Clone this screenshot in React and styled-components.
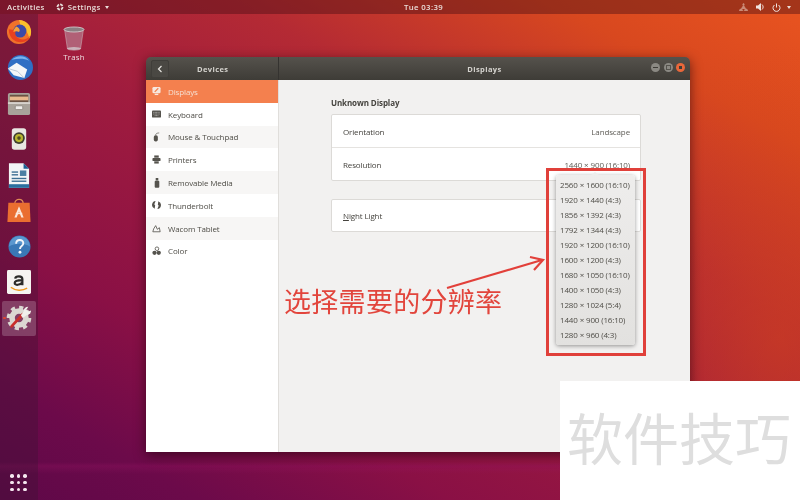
import React from "react";
import styled, { createGlobalStyle } from "styled-components";

const Global = createGlobalStyle`
  html, body { margin: 0; padding: 0; width: 800px; height: 500px; overflow: hidden; background: #fff; }
  * { box-sizing: border-box; }
  body { font-family: "Open Sans", "Noto Sans", "Noto Sans CJK SC", sans-serif; }
`;

const Desktop = styled.div`
  position: relative; width: 800px; height: 500px; overflow: hidden;
  display: flex; flex-direction: column; filter: blur(.3px);
  background:
    linear-gradient(180deg, transparent 0 462px, rgba(150,20,100,.3) 466px, transparent 474px),
    radial-gradient(ellipse 200px 300px at 780px 340px, rgba(215,70,25,.5) 0%, rgba(215,70,25,0) 100%),
    linear-gradient(30deg, #5e0848 0%, #6c0a4a 12%, #8a1045 27%, #a01c3e 50%, #b42a34 66%, #d8481f 85%, #e95420 100%);
`;
const TopBar = styled.header`
  height: 14px; flex: none; display: grid; grid-template-columns: 1fr auto 1fr; align-items: center;
  background: rgba(70, 12, 18, .42); color: #eadcd8; font-size: 7.8px; font-weight: 600; letter-spacing: .35px;
  padding: 0 0 0 7px;
`;
const TopLeft = styled.div` display: flex; align-items: center; gap: 11px; `;
const AppMenu = styled.div` display: flex; align-items: center; gap: 4px; `;
const Clock = styled.span` margin-left: 40px; `;
const Caret = styled.span`
  width: 0; height: 0; border-left: 2.5px solid transparent; border-right: 2.5px solid transparent; border-top: 3px solid #eadcd8;
`;
const TopRight = styled.div` display: flex; align-items: center; justify-content: flex-end; gap: 6px; padding-right: 9px; `;
const Body = styled.div` flex: 1; display: flex; min-height: 0; `;
const Dock = styled.nav`
  width: 38px; flex: none; display: flex; flex-direction: column; align-items: center;
  background: rgba(60, 20, 50, .34); padding-top: 0.5px; position: relative;
`;
const DockSlot = styled.div`
  width: 34px; height: 35px; margin-bottom: .75px; display: flex; align-items: center; justify-content: center;
  border-radius: 2px; position: relative; background: ${p => p.$active ? "rgba(255,255,255,.2)" : "transparent"};
`;
const RunDot = styled.span`
  position: absolute; left: 1px; top: 16px; width: 2.5px; height: 2.5px; border-radius: 50%; background: #e0452f;
`;
const AppsGrid = styled.div`
  position: absolute; bottom: 9px; left: 10px; display: grid; grid-template-columns: repeat(3, 3.5px); gap: 3.2px;
`;
const AppsDot = styled.span` width: 3.5px; height: 3.5px; border-radius: 50%; background: #f6e8f0; `;

const DesktopIcon = styled.div`
  position: absolute; left: 55px; top: 26px; width: 38px; display: flex; flex-direction: column; align-items: center;
  color: #eedde0; font-size: 7.8px; letter-spacing: .2px; gap: 1px;
`;

const Window = styled.section`
  position: absolute; left: 146px; top: 57px; width: 544px; height: 395px;
  border-radius: 5px 5px 0 0; overflow: hidden; display: flex; flex-direction: column;
  box-shadow: 0 3px 12px rgba(30,0,10,.6);
`;
const TitleBar = styled.div`
  height: 23px; flex: none; display: flex; background: linear-gradient(#55524c, #3e3c37); color: #d6d4cf;
  font-size: 7.5px; font-weight: 700; letter-spacing: .4px;
`;
const TitleLeft = styled.div`
  width: 133px; flex: none; display: flex; align-items: center; border-right: 1px solid #353330; padding-left: 5px;
`;
const BackBtn = styled.div`
  width: 18px; height: 18px; display: flex; align-items: center; justify-content: center; border: 1px solid #403e3a;
  border-radius: 2px; margin-right: 28px; background: #4a4843;
`;
const TitleMain = styled.div` flex: 1; display: flex; align-items: center; justify-content: center; position: relative; `;
const Controls = styled.div` position: absolute; right: 5px; top: 6px; display: flex; gap: 3.5px; `;
const Ctl = styled.span`
  width: 9px; height: 9px; border-radius: 50%; background: ${p => p.$close ? "#e9673a" : "#8b8983"};
  display: flex; align-items: center; justify-content: center;
`;
const CtlMark = styled.span`
  width: ${p => p.$w}px; height: ${p => p.$h}px; background: ${p => p.$fill ? "#3e3c37" : "transparent"};
  border: ${p => p.$fill ? "none" : "1px solid #55534d"};
`;
const Content = styled.div` flex: 1; display: flex; min-height: 0; `;
const Sidebar = styled.aside` width: 133px; flex: none; background: #fff; border-right: 1px solid #e0dedb; `;
const SideRow = styled.div`
  height: 22.8px; display: flex; align-items: center; gap: 7px; padding-left: 6px; font-size: 8px; letter-spacing: -.13px;
  color: ${p => p.$active ? "#f5dfd2" : "#4f4d47"};
  background: ${p => p.$active ? "#f4804e" : p.$alt ? "#f7f6f5" : "#fff"};
`;
const SideIcon = styled.span` width: 9px; height: 9px; flex: none; display: flex; align-items: center; justify-content: center; `;
const Main = styled.main` flex: 1; background: #f2f1f0; padding: 17px 0 0 52px; color: #45433e; font-size: 8px; `;
const Heading = styled.h2` margin: 0 0 6px; font-size: 8px; font-weight: 700; color: #45433e; line-height: 11px; letter-spacing: -.1px; `;
const Frame = styled.div`
  width: 310px; background: #fff; border: 1px solid #dcdad7; border-radius: 2px; margin-bottom: 18px;
`;
const FrameRow = styled.div`
  height: ${p => p.$first ? "32px" : "33px"}; display: flex; align-items: center; justify-content: space-between; padding: 0 10px 0 11px;
  border-top: ${p => p.$first ? "none" : "1px solid #e5e3e0"};
  letter-spacing: -.13px;
`;
const NightRow = styled(FrameRow)` height: 31px; `;
const Value = styled.span` color: #5f5d57; `;
const Under = styled.span` text-decoration: underline; `;

const Popover = styled.div`
  position: absolute; left: 556px; top: 175px; width: 79px; height: 170px; padding: 1.500px 0 0 4px;
  background: linear-gradient(#eeedec, #e2e1df); border-radius: 3px; box-shadow: 0 1px 4px rgba(0,0,0,.4);
  font-size: 8px; color: #4f4d47; white-space: nowrap;
`;
const Notch = styled.span`
  position: absolute; left: 35px; top: -3px; width: 0; height: 0;
  border-left: 4px solid transparent; border-right: 4px solid transparent; border-bottom: 3px solid #eeedec;
`;
const PopItem = styled.div` height: 15px; display: flex; align-items: center; letter-spacing: -.15px; `;
const RedBox = styled.div`
  position: absolute; left: 546px; top: 168px; width: 100px; height: 188px; border: 3px solid #e0403a;
`;
const Callout = styled.div`
  position: absolute; left: 284px; top: 285px; font-size: 27px; line-height: 32px; color: #e2453c; white-space: nowrap;
  font-family: "Noto Sans CJK SC", sans-serif; font-weight: 400; letter-spacing: .3px;
`;
const ArrowLayer = styled.svg` position: absolute; left: 440px; top: 245px; `;
const Watermark = styled.div`
  position: absolute; left: 560px; top: 381px; width: 240px; height: 119px; background: #fff; color: #dedede;
  font-family: "Noto Sans CJK SC", sans-serif; font-size: 56px; line-height: 60px; padding: 25px 0 0 7px; white-space: nowrap;
  font-weight: 400;
`;

const Firefox = () => (
  <svg width="26" height="26" viewBox="0 0 28 28">
    <circle cx="14" cy="14" r="13" fill="#f0722a" />
    <path d="M14 1a13 13 0 0 1 13 13c0 3-1 5-2 7-1-6-4-11-11-12 2-2 1-5 0-8z" fill="#fbc02d" />
    <circle cx="15" cy="13" r="7" fill="#3c4aa8" />
    <path d="M3 11c0 9 6 14 13 14 5 0 9-3 10-7-3 4-8 5-12 3-4-2-5-6-3-9-3 0-6-1-8-1z" fill="#e8411f" />
    <path d="M11 8c-2 2-3 4-3 6 2-1 4-1 6 0 2-2 0-5-3-6z" fill="#f6a13a" />
  </svg>
);
const Thunderbird = () => (
  <svg width="27" height="27" viewBox="0 0 28 28">
    <circle cx="15" cy="14" r="13" fill="#2f6fc4" />
    <path d="M6 6c5-5 14-5 18 1-6-3-12-2-18-1z" fill="#7bb3ee" />
    <path d="M2 15l9-6 11 7-3 9-11-3z" fill="#f4f6f8" />
    <path d="M2 15l10 3 7 7" fill="none" stroke="#b9c6d4" strokeWidth="1" />
  </svg>
);
const Files = () => (
  <svg width="24" height="24" viewBox="0 0 26 26">
    <rect x="1" y="1" width="24" height="24" rx="2" fill="#a8a29a" />
    <rect x="3" y="3" width="20" height="8" fill="#6b5344" />
    <rect x="3" y="5" width="20" height="4" fill="#e9b98d" />
    <rect x="1" y="11" width="24" height="2" fill="#d6d2cc" />
    <rect x="9" y="15" width="8" height="4" rx="1" fill="#efedea" stroke="#6f6a63" strokeWidth=".6" />
  </svg>
);
const Speaker = () => (
  <svg width="18" height="24" viewBox="0 0 20 26">
    <rect x="2" y="1" width="16" height="24" rx="3" fill="#e9e7e2" />
    <circle cx="10" cy="12" r="6.500" fill="#3f3f2e" />
    <circle cx="10" cy="12" r="4.500" fill="#b8b530" />
    <circle cx="10" cy="12" r="2" fill="#4e4e22" />
  </svg>
);
const Writer = () => (
  <svg width="22" height="25" viewBox="0 0 24 27">
    <path d="M1 0h16l6 6v21H1z" fill="#f3f5f6" />
    <path d="M17 0l6 6h-6z" fill="#1c5f94" />
    <rect x="1" y="23" width="22" height="4" fill="#2a6f9f" />
    <rect x="4" y="9" width="7" height="1.500" fill="#3d6f93" /><rect x="4" y="12" width="7" height="1.500" fill="#3d6f93" />
    <rect x="13" y="8" width="7" height="6" fill="#4b7fa3" />
    <rect x="4" y="16" width="16" height="1.500" fill="#3d6f93" /><rect x="4" y="19" width="16" height="1.500" fill="#3d6f93" />
  </svg>
);
const Store = () => (
  <svg width="24" height="25" viewBox="0 0 25 27">
    <path d="M8 6c0-6 9-6 9 0" fill="none" stroke="#e08a54" strokeWidth="1.400" />
    <path d="M1 5h23l1 21H0z" fill="#ea6e30" />
    <path d="M12.500 9l5 12h-2.500l-2.500-6.500L10 21H7.500z" fill="#fbe7da" />
    <rect x="9" y="16" width="7" height="1.500" fill="#fbe7da" />
  </svg>
);
const Help = () => (
  <svg width="23" height="23" viewBox="0 0 24 24">
    <circle cx="12" cy="12" r="11.500" fill="#3a78b6" />
    <path d="M1 12a11 11 0 0 1 22 0c-6-4-16-4-22 0z" fill="#5a97cf" />
    <path d="M8.500 9c0-5 7.500-5 7.500-.5 0 3-3.500 3-3.500 6" fill="none" stroke="#f1f5f9" strokeWidth="2" />
    <circle cx="12.500" cy="18" r="1.500" fill="#f1f5f9" />
  </svg>
);
const Amazon = () => (
  <svg width="24" height="24" viewBox="0 0 25 25">
    <rect width="25" height="25" rx="1.500" fill="#f6f4f1" />
    <path d="M8.500 9c.5-3 7.500-3.500 7.500.5V16M16 10.500c-5 0-8 .7-8 3 0 2.700 6 2.500 8-.5" fill="none" stroke="#2b2a28" strokeWidth="2.300" />
    <path d="M4 18c5 4 12 4 17 1" fill="none" stroke="#ef9a21" strokeWidth="1.500" />
  </svg>
);
const SettingsIcon = () => (
  <svg width="26" height="26" viewBox="0 0 28 28">
    <circle cx="14" cy="14" r="7.500" fill="none" stroke="#dbd8d2" strokeWidth="6" />
    <circle cx="14" cy="14" r="11.500" fill="none" stroke="#dbd8d2" strokeWidth="3.500" strokeDasharray="4.500 4.500" />
    <path d="M6 23L18 10" stroke="#c9302c" strokeWidth="3" strokeLinecap="round" />
    <path d="M16 11l3-4c0-3 2-5 5-5l-2 3 2 2 3-1c0 3-3 5-5 5l-4 3z" fill="#f1efec" />
  </svg>
);
const Trash = () => (
  <svg width="22" height="25" viewBox="0 0 22 25">
    <path d="M1.500 3l3 20c2 1.500 11 1.500 13 0l3-20z" fill="#b6778a" fillOpacity=".75" stroke="#c9a9b2" strokeWidth=".6" />
    <ellipse cx="11" cy="3.500" rx="10" ry="2.500" fill="#8b7f82" stroke="#cfc8c9" strokeWidth=".9" />
    <ellipse cx="11" cy="22.500" rx="7" ry="1.500" fill="#cbb3bb" />
  </svg>
);

const G = "#55534d";
const SideGlyphs = {
  display: <svg width="10" height="10" viewBox="0 0 10 10"><rect x="0.500" y="0.500" width="9" height="7" rx="1.500" fill="#f7e8df" /><path d="M3 6l4-4" stroke="#f4804e" strokeWidth="1.400" /><rect x="3" y="8" width="4" height="1.500" fill="#f7e8df" /></svg>,
  keyboard: <svg width="10" height="8" viewBox="0 0 10 8"><rect width="10" height="8" rx="1" fill={G} /><path d="M1.500 2.200h7M1.500 4h7M3 5.800h4" stroke="#ddd" strokeWidth=".7" strokeDasharray="1 .6" /></svg>,
  mouse: <svg width="10" height="10" viewBox="0 0 10 10"><rect x="2" y="3" width="4.500" height="7" rx="2" fill={G} /><path d="M4 3c0-2 2-2.500 4-2.500" fill="none" stroke={G} strokeWidth=".7" /></svg>,
  printer: <svg width="10" height="9" viewBox="0 0 10 9"><rect x="2.500" y="0" width="5" height="2.500" fill={G} /><rect x="0.500" y="2.800" width="9" height="3.500" rx="1" fill={G} /><rect x="2.500" y="6.500" width="5" height="2.500" fill={G} /></svg>,
  usb: <svg width="6" height="10" viewBox="0 0 6 10"><rect x="1.700" y="0" width="2.600" height="2.500" fill={G} /><rect x=".7" y="2.800" width="4.600" height="7" rx="1" fill={G} /></svg>,
  bolt: <svg width="10" height="10" viewBox="0 0 10 10"><path d="M4 .5A4.500 4.500 0 0 0 3 9.200L3.500 5 2.500 4.500zM6 9.500A4.500 4.500 0 0 0 7 .8L6.500 5l1 .5z" fill={G} /></svg>,
  wacom: <svg width="11" height="9" viewBox="0 0 11 9"><path d="M1 8.500h9L9 3.500 6.500 5.500 4.500 1 2 5z" fill="none" stroke={G} strokeWidth="1" /></svg>,
  color: <svg width="10" height="10" viewBox="0 0 10 10"><circle cx="5.500" cy="2.500" r="2" fill="none" stroke={G} strokeWidth=".9" /><circle cx="7.500" cy="7" r="2.400" fill={G} /><circle cx="2.800" cy="7" r="2.400" fill={G} /></svg>,
};

const rows = [
  ["display", "Displays"], ["keyboard", "Keyboard"], ["mouse", "Mouse & Touchpad"], ["printer", "Printers"],
  ["usb", "Removable Media"], ["bolt", "Thunderbolt"], ["wacom", "Wacom Tablet"], ["color", "Color"],
];
const modes = ["2560 × 1600 (16:10)", "1920 × 1440 (4:3)", "1856 × 1392 (4:3)", "1792 × 1344 (4:3)", "1920 × 1200 (16:10)", "1600 × 1200 (4:3)", "1680 × 1050 (16:10)", "1400 × 1050 (4:3)", "1280 × 1024 (5:4)", "1440 × 900 (16:10)", "1280 × 960 (4:3)"];
const dock = [<Firefox />, <Thunderbird />, <Files />, <Speaker />, <Writer />, <Store />, <Help />, <Amazon />];

export default function App() {
  return (
    <Desktop>
      <Global />
      <TopBar>
        <TopLeft>
          <span>Activities</span>
          <AppMenu>
            <svg width="8" height="8" viewBox="0 0 8 8"><circle cx="4" cy="4" r="2.600" fill="none" stroke="#e4d8d4" strokeWidth="1.800" strokeDasharray="3 1" /></svg>
            <span>Settings</span><Caret />
          </AppMenu>
        </TopLeft>
        <Clock>Tue 03:39</Clock>
        <TopRight>
          <svg width="9" height="8" viewBox="0 0 9 8" style={{ marginRight: 2, opacity: .6 }}><path d="M4.500 0l1 2h-2zM0 8l1-2h2l1 2zM5 8l1-2h2l1 2zM2 6l2.500-4L7 6" fill="#e6c4b4" stroke="#e6c4b4" strokeWidth=".4" /></svg>
          <svg width="9" height="8" viewBox="0 0 9 8"><path d="M0 2.500h2L5 0v8L2 5.500H0z" fill="#efe3de" /><path d="M6 1.500c1.500 1.500 1.500 3.500 0 5" fill="none" stroke="#efe3de" /></svg>
          <svg width="9" height="9" viewBox="0 0 9 9" style={{ marginLeft: 1 }}><path d="M2.500 2a3.500 3.500 0 1 0 4 0M4.500 .5v4" fill="none" stroke="#efe3de" strokeWidth="1" /></svg>
          <Caret />
        </TopRight>
      </TopBar>
      <Body>
        <Dock>
          {dock.map((icon, i) => <DockSlot key={i}>{icon}</DockSlot>)}
          <DockSlot $active><RunDot /><SettingsIcon /></DockSlot>
          <AppsGrid>{Array.from({ length: 9 }, (_, i) => <AppsDot key={i} />)}</AppsGrid>
        </Dock>
      </Body>
      <DesktopIcon><Trash /><span>Trash</span></DesktopIcon>
      <Window>
        <TitleBar>
          <TitleLeft>
            <BackBtn><svg width="6" height="8" viewBox="0 0 6 8"><path d="M4.500 1L1.500 4l3 3" fill="none" stroke="#e6e4df" strokeWidth="1.200" /></svg></BackBtn>
            <span>Devices</span>
          </TitleLeft>
          <TitleMain>Displays
            <Controls>
              <Ctl><CtlMark $fill $w={5} $h={1} /></Ctl>
              <Ctl><CtlMark $w={5} $h={5} /></Ctl>
              <Ctl $close><CtlMark $fill $w={3} $h={3} /></Ctl>
            </Controls>
          </TitleMain>
        </TitleBar>
        <Content>
          <Sidebar>
            {rows.map(([k, label], i) => (
              <SideRow key={k} $active={i === 0} $alt={i % 2 === 0}>
                <SideIcon>{SideGlyphs[k]}</SideIcon>{label}
              </SideRow>
            ))}
          </Sidebar>
          <Main>
            <Heading>Unknown Display</Heading>
            <Frame>
              <FrameRow $first><span>Orientation</span><Value>Landscape</Value></FrameRow>
              <FrameRow><span>Resolution</span><Value>1440 × 900 (16:10)</Value></FrameRow>
            </Frame>
            <Frame>
              <NightRow $first><span><Under>N</Under>ight Light</span></NightRow>
            </Frame>
          </Main>
        </Content>
      </Window>
      <Popover>
        <Notch />
        {modes.map(m => <PopItem key={m}>{m}</PopItem>)}
      </Popover>
      <RedBox />
      <ArrowLayer width="110" height="50" viewBox="0 0 110 50">
        <path d="M7 43L102 15" stroke="#e2403a" strokeWidth="2.200" fill="none" />
        <path d="M90 12L103 15 94 25" stroke="#e2403a" strokeWidth="2.200" fill="none" />
      </ArrowLayer>
      <Callout>选择需要的分辨率</Callout>
      <Watermark>软件技巧</Watermark>
    </Desktop>
  );
}
